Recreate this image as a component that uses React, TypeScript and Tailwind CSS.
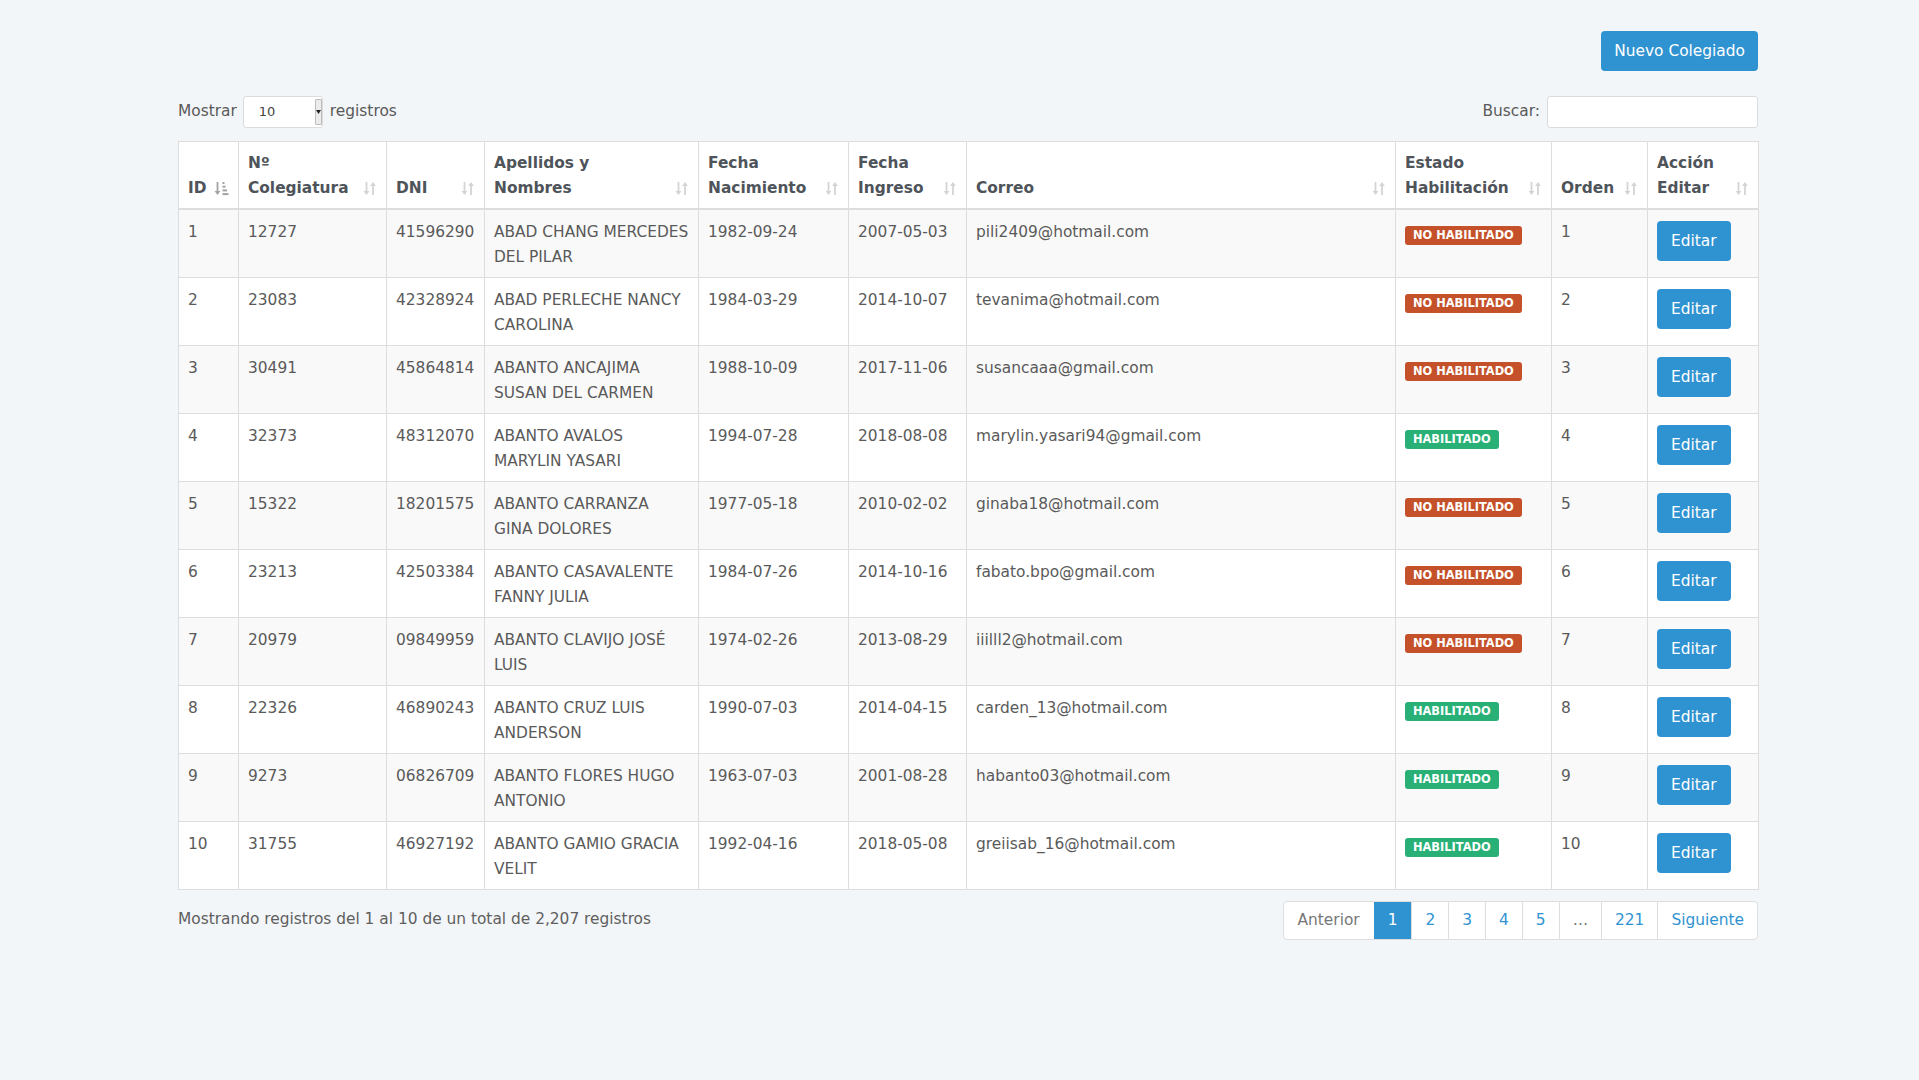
import React from "react";

type Row = {
  id: number;
  col: string;
  dni: string;
  name: [string, string];
  nac: string;
  ing: string;
  mail: string;
  ok: boolean;
};

const rows: Row[] = [
  { id: 1, col: "12727", dni: "41596290", name: ["ABAD CHANG MERCEDES", "DEL PILAR"], nac: "1982-09-24", ing: "2007-05-03", mail: "pili2409@hotmail.com", ok: false },
  { id: 2, col: "23083", dni: "42328924", name: ["ABAD PERLECHE NANCY", "CAROLINA"], nac: "1984-03-29", ing: "2014-10-07", mail: "tevanima@hotmail.com", ok: false },
  { id: 3, col: "30491", dni: "45864814", name: ["ABANTO ANCAJIMA", "SUSAN DEL CARMEN"], nac: "1988-10-09", ing: "2017-11-06", mail: "susancaaa@gmail.com", ok: false },
  { id: 4, col: "32373", dni: "48312070", name: ["ABANTO AVALOS", "MARYLIN YASARI"], nac: "1994-07-28", ing: "2018-08-08", mail: "marylin.yasari94@gmail.com", ok: true },
  { id: 5, col: "15322", dni: "18201575", name: ["ABANTO CARRANZA", "GINA DOLORES"], nac: "1977-05-18", ing: "2010-02-02", mail: "ginaba18@hotmail.com", ok: false },
  { id: 6, col: "23213", dni: "42503384", name: ["ABANTO CASAVALENTE", "FANNY JULIA"], nac: "1984-07-26", ing: "2014-10-16", mail: "fabato.bpo@gmail.com", ok: false },
  { id: 7, col: "20979", dni: "09849959", name: ["ABANTO CLAVIJO JOSÉ", "LUIS"], nac: "1974-02-26", ing: "2013-08-29", mail: "iiilll2@hotmail.com", ok: false },
  { id: 8, col: "22326", dni: "46890243", name: ["ABANTO CRUZ LUIS", "ANDERSON"], nac: "1990-07-03", ing: "2014-04-15", mail: "carden_13@hotmail.com", ok: true },
  { id: 9, col: "9273", dni: "06826709", name: ["ABANTO FLORES HUGO", "ANTONIO"], nac: "1963-07-03", ing: "2001-08-28", mail: "habanto03@hotmail.com", ok: true },
  { id: 10, col: "31755", dni: "46927192", name: ["ABANTO GAMIO GRACIA", "VELIT"], nac: "1992-04-16", ing: "2018-05-08", mail: "greiisab_16@hotmail.com", ok: true },
];

const columns: { label: React.ReactNode; width: number; active?: boolean }[] = [
  { label: "ID", width: 60, active: true },
  { label: <>Nº<br />Colegiatura</>, width: 148 },
  { label: "DNI", width: 98 },
  { label: <>Apellidos y<br />Nombres</>, width: 214 },
  { label: <>Fecha<br />Nacimiento</>, width: 150 },
  { label: <>Fecha<br />Ingreso</>, width: 118 },
  { label: "Correo", width: 429 },
  { label: <>Estado<br />Habilitación</>, width: 156 },
  { label: "Orden", width: 96 },
  { label: <>Acción<br />Editar</>, width: 111 },
];

function SortIcon() {
  return (
    <svg width="14" height="15" viewBox="0 0 14 15" className="mb-[4px] shrink-0">
      <g stroke="#d4d4d4" strokeWidth="1.8" fill="none">
        <path d="M3.5 1v11" />
        <path d="M10 3v11" />
      </g>
      <path d="M0.6 10 L3.5 14 L6.4 10 Z" fill="#d4d4d4" />
      <path d="M7.1 5 L10 1 L12.9 5 Z" fill="#d4d4d4" />
    </svg>
  );
}

function SortActiveIcon() {
  return (
    <svg width="15" height="15" viewBox="0 0 15 15" className="mb-[4px] shrink-0">
      <path d="M3.5 1v11" stroke="#a3a3a3" strokeWidth="1.8" />
      <path d="M0.6 10 L3.5 14 L6.4 10 Z" fill="#a3a3a3" />
      <g fill="#a3a3a3">
        <rect x="8.5" y="1" width="2" height="2" />
        <rect x="8.5" y="4.7" width="3" height="2" />
        <rect x="8.5" y="8.4" width="4.5" height="2" />
        <rect x="8.5" y="12.1" width="6" height="2" />
      </g>
    </svg>
  );
}

const td = "border border-[#ddd] px-[9px] pt-[10px] pb-[8px] align-top leading-[24.5px]";
const badge =
  "mt-[6px] inline-flex h-[19px] items-center rounded-[3px] px-[8px] text-[11.4px] font-bold leading-none text-white";

export default function App() {
  return (
    <div className="min-h-screen bg-[#f3f6f9] font-['DejaVu_Sans',sans-serif] text-[15.4px] text-[#5a5a5a]">
      <div className="ml-[178px] w-[1580px] pt-[31px] pb-10">
        <div className="flex justify-end">
          <button
            type="button"
            className="h-[40px] rounded-[4px] bg-[#2f93d1] px-[13px] leading-6 text-white"
          >
            Nuevo Colegiado
          </button>
        </div>

        <div className="mt-[25px] flex h-[32px] items-center justify-between">
          <div className="flex items-center">
            <span>Mostrar</span>
            <div className="ml-[6px] flex h-[32px] w-[80px] items-stretch rounded-[3px] border border-[#dcdcdc] bg-white">
              <span className="flex flex-1 items-center pl-[15px] text-[13px] text-[#444]">10</span>
              <span className="my-[2px] flex w-[7px] items-center justify-center rounded-[1px] border border-[#bdbdbd] bg-[#ececec]">
                <svg width="5" height="4" viewBox="0 0 5 4">
                  <path d="M0 0 L5 0 L2.5 4 Z" fill="#222" />
                </svg>
              </span>
            </div>
            <span className="ml-[7px]">registros</span>
          </div>
          <div className="flex items-center">
            <span>Buscar:</span>
            <div className="ml-[7px] h-[32px] w-[211px] rounded-[3px] border border-[#dcdcdc] bg-white" />
          </div>
        </div>

        <table className="mt-[13px] w-[1580px] table-fixed border-collapse border border-[#ddd] bg-white">
          <colgroup>
            {columns.map((c, i) => (
              <col key={i} style={{ width: c.width }} />
            ))}
          </colgroup>
          <thead>
            <tr>
              {columns.map((c, i) => (
                <th
                  key={i}
                  className="border-x border-b-2 border-[#ddd] px-[9px] pt-[9px] pb-[8px] text-left align-bottom font-bold leading-[24.5px] text-[#4e545a]"
                >
                  <div className="flex items-end justify-between gap-1">
                    <span>{c.label}</span>
                    {c.active ? <SortActiveIcon /> : <SortIcon />}
                  </div>
                </th>
              ))}
            </tr>
          </thead>
          <tbody>
            {rows.map((r, i) => (
              <tr key={r.id} className={i % 2 === 0 ? "bg-[#f9f9f9]" : "bg-white"}>
                <td className={td}>{r.id}</td>
                <td className={td}>{r.col}</td>
                <td className={td}>{r.dni}</td>
                <td className={td}>
                  {r.name[0]}
                  <br />
                  {r.name[1]}
                </td>
                <td className={td}>{r.nac}</td>
                <td className={td}>{r.ing}</td>
                <td className={td}>{r.mail}</td>
                <td className={td}>
                  <div className="h-[49px]">
                    <span className={r.ok ? `${badge} bg-[#28b077]` : `${badge} bg-[#c4512a]`}>
                      {r.ok ? "HABILITADO" : "NO HABILITADO"}
                    </span>
                  </div>
                </td>
                <td className={td}>{r.id}</td>
                <td className={td}>
                  <div className="h-[49px] pt-[1px]">
                    <button
                      type="button"
                      className="h-[40px] rounded-[4px] bg-[#2f93d1] px-[14px] leading-6 text-white"
                    >
                      Editar
                    </button>
                  </div>
                </td>
              </tr>
            ))}
          </tbody>
        </table>

        <div className="mt-[11px] flex items-start justify-between">
          <div className="mt-[6px] leading-6 text-[#5f5f5f]">
            Mostrando registros del 1 al 10 de un total de 2,207 registros
          </div>
          <div className="flex h-[39px] overflow-hidden rounded-[4px] border border-[#dedede] bg-white leading-[25px]">
            <span className="px-[14px] py-[6px] text-[#777]">Anterior</span>
            <span className="bg-[#2f93d1] px-[14px] py-[6px] text-white">1</span>
            {["2", "3", "4", "5"].map((p) => (
              <span key={p} className="border-l border-[#dedede] px-[13px] py-[6px] text-[#2f93d1]">
                {p}
              </span>
            ))}
            <span className="border-l border-[#dedede] px-[13px] py-[6px] text-[#777]">…</span>
            <span className="border-l border-[#dedede] px-[13px] py-[6px] text-[#2f93d1]">221</span>
            <span className="border-l border-[#dedede] px-[13px] py-[6px] text-[#2f93d1]">Siguiente</span>
          </div>
        </div>
      </div>
    </div>
  );
}
